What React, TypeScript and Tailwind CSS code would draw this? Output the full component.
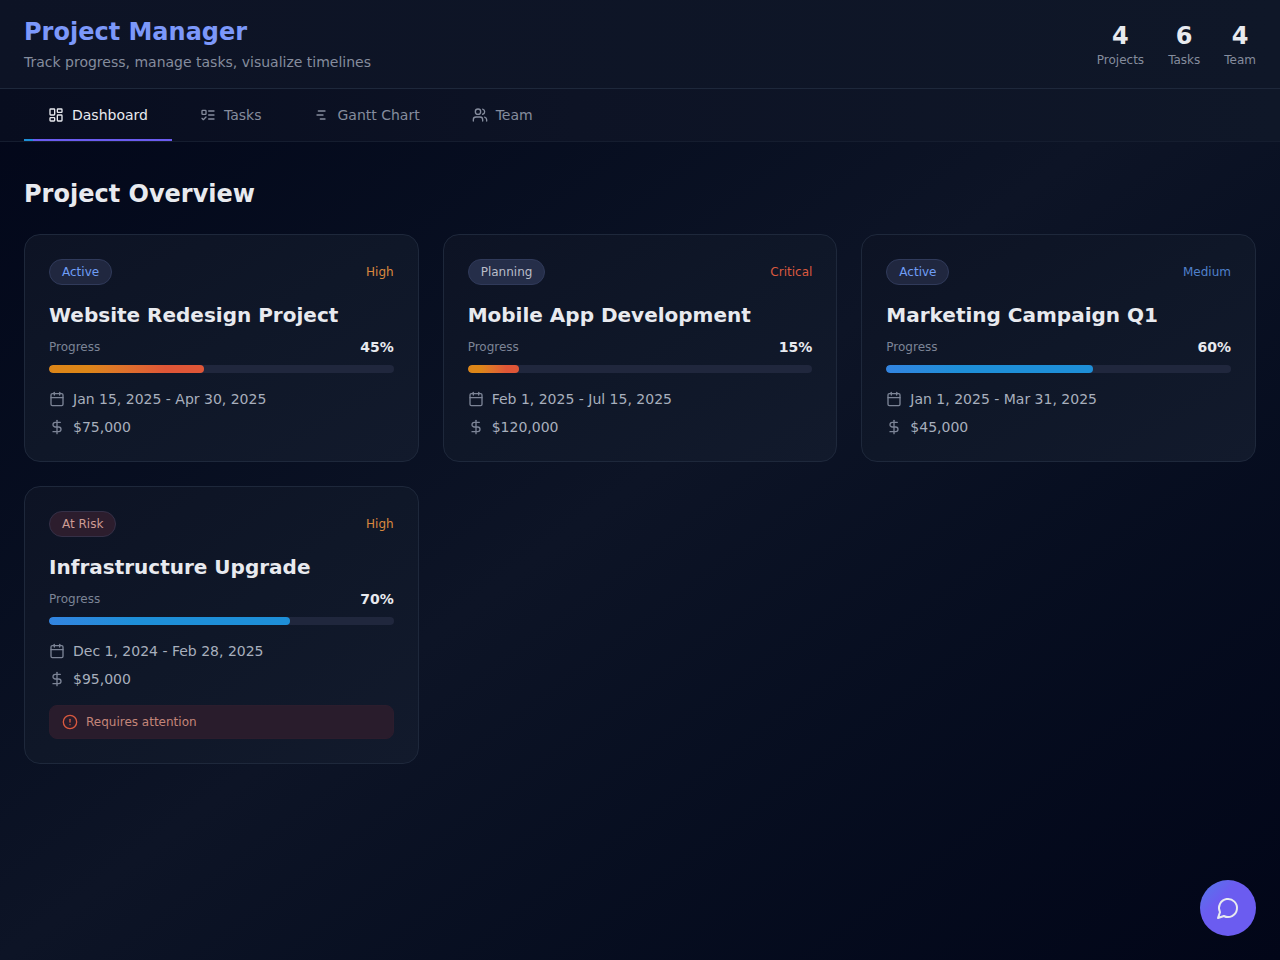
import type { ReactNode } from 'react';
import { Calendar, CircleAlert, DollarSign, LayoutDashboard, Users } from 'lucide-react';
import clsx from 'clsx';

type Project = {
  name: string;
  status: 'Active' | 'Planning' | 'At Risk';
  priority: 'High' | 'Critical' | 'Medium';
  progress: number;
  dates: string;
  budget: string;
};

const projects: Project[] = [
  { name: 'Website Redesign Project', status: 'Active', priority: 'High', progress: 45, dates: 'Jan 15, 2025 - Apr 30, 2025', budget: '$75,000' },
  { name: 'Mobile App Development', status: 'Planning', priority: 'Critical', progress: 15, dates: 'Feb 1, 2025 - Jul 15, 2025', budget: '$120,000' },
  { name: 'Marketing Campaign Q1', status: 'Active', priority: 'Medium', progress: 60, dates: 'Jan 1, 2025 - Mar 31, 2025', budget: '$45,000' },
  { name: 'Infrastructure Upgrade', status: 'At Risk', priority: 'High', progress: 70, dates: 'Dec 1, 2024 - Feb 28, 2025', budget: '$95,000' },
];

const stats = [
  { value: 4, label: 'Projects' },
  { value: 6, label: 'Tasks' },
  { value: 4, label: 'Team' },
];

function StrokeIcon({ size, children }: { size: number; children: ReactNode }) {
  return (
    <svg
      width={size}
      height={size}
      viewBox="0 0 24 24"
      fill="none"
      stroke="currentColor"
      strokeWidth="2"
      strokeLinecap="round"
      strokeLinejoin="round"
    >
      {children}
    </svg>
  );
}

function TasksIcon({ size }: { size: number }) {
  return (
    <StrokeIcon size={size}>
      <rect x="3" y="5" width="6" height="6" rx="1" />
      <path d="m3 17 2 2 4-4" />
      <path d="M13 6h8" />
      <path d="M13 12h8" />
      <path d="M13 18h8" />
    </StrokeIcon>
  );
}

function GanttIcon({ size }: { size: number }) {
  return (
    <StrokeIcon size={size}>
      <path d="M8 6h10" />
      <path d="M6 12h9" />
      <path d="M11 18h7" />
    </StrokeIcon>
  );
}

function ChatIcon({ size }: { size: number }) {
  return (
    <StrokeIcon size={size}>
      <path d="M7.9 20A9 9 0 1 0 4 16.1L2 22Z" />
    </StrokeIcon>
  );
}

const tabs = [
  { label: 'Dashboard', icon: LayoutDashboard },
  { label: 'Tasks', icon: TasksIcon },
  { label: 'Gantt Chart', icon: GanttIcon },
  { label: 'Team', icon: Users },
];

const statusStyles = {
  Active: 'border-[#303a5a] bg-[#20273f] text-[#6f9df5]',
  Planning: 'border-[#303a5a] bg-[#252e49] text-[#b9bdc8]',
  'At Risk': 'border-[#353047] bg-[#2c1d2d] text-[#cf9c94]',
};

const priorityStyles = {
  High: 'text-[#d9883f]',
  Critical: 'text-[#d9593f]',
  Medium: 'text-[#4f80cb]',
};

function ProjectCard({ project }: { project: Project }) {
  return (
    <article className="rounded-2xl border border-[#1e283b] bg-linear-to-br from-[#0d1324] via-[#0f1728] to-[#121a2c] p-6">
      <div className="mb-4 flex items-center justify-between text-xs">
        <span className={clsx('rounded-full border px-3 py-1', statusStyles[project.status])}>{project.status}</span>
        <span className={priorityStyles[project.priority]}>{project.priority}</span>
      </div>
      <h3 className="mb-2 text-xl font-semibold text-[#e8eaef]">{project.name}</h3>
      <div className="mb-2 flex items-center justify-between">
        <span className="text-xs text-[#7c8496]">Progress</span>
        <span className="text-sm font-semibold text-[#e8eaef]">{project.progress}%</span>
      </div>
      <div className="h-2 overflow-hidden rounded-full bg-[#20273d]">
        <div
          className={clsx(
            'h-full rounded-full',
            project.progress < 50
              ? 'bg-linear-to-r from-[#dd8618] from-25% to-[#df5637] to-75%'
              : 'bg-linear-to-r from-[#3284e0] to-[#1e8fd8] to-35%',
          )}
          style={{ width: `${project.progress}%` }}
        />
      </div>
      <div className="mt-4 flex flex-col gap-2 text-sm text-[#a8afbd]">
        <div className="flex items-center gap-2">
          <Calendar size={16} className="text-[#7c8496]" />
          {project.dates}
        </div>
        <div className="flex items-center gap-2">
          <DollarSign size={16} className="text-[#7c8496]" />
          {project.budget}
        </div>
      </div>
      {project.status === 'At Risk' && (
        <div className="mt-4 flex items-center gap-2 rounded-lg border border-[#2c1d2d] bg-[#291c2c] px-3 py-2 text-xs text-[#c48579]">
          <CircleAlert size={16} className="text-[#d9593f]" />
          Requires attention
        </div>
      )}
    </article>
  );
}

export default function App() {
  return (
    <div className="min-h-screen bg-linear-to-br from-[#020618] via-[#0d1426] to-[#020618] font-['DejaVu_Sans',sans-serif]">
      <header className="flex items-center justify-between border-b border-[#1e283b] bg-linear-to-r from-[#0d1325] to-[#0f1728] px-6 py-4">
        <div>
          <h1 className="text-2xl font-bold text-[#7c98fa]">Project Manager</h1>
          <p className="mt-1 text-sm text-[#858c9d]">Track progress, manage tasks, visualize timelines</p>
        </div>
        <div className="flex gap-6 text-center">
          {stats.map((stat) => (
            <div key={stat.label}>
              <div className="text-2xl font-bold text-[#e8eaef]">{stat.value}</div>
              <div className="text-xs text-[#858c9d]">{stat.label}</div>
            </div>
          ))}
        </div>
      </header>
      <nav className="flex gap-1 border-b border-[#151d2f] bg-linear-to-r from-[#080d1f] via-[#0d1325] via-45% to-[#0f1728] px-6">
        {tabs.map(({ label, icon: Icon }, index) => (
          <button
            key={label}
            className={clsx(
              'relative flex items-center gap-2 px-6 py-4 text-sm',
              index === 0 ? 'text-[#e8eaef]' : 'text-[#858c9d]',
            )}
          >
            <Icon size={16} />
            {label}
            {index === 0 && (
              <span className="absolute inset-x-0 bottom-0 h-0.5 bg-linear-to-r from-[#1e8fd8] from-6% to-[#6b5cf0] to-6%" />
            )}
          </button>
        ))}
      </nav>
      <main className="px-6 py-9">
        <h2 className="mb-6 text-2xl font-bold text-[#e8eaef]">Project Overview</h2>
        <div className="grid grid-cols-3 items-start gap-6">
          {projects.map((project) => (
            <ProjectCard key={project.name} project={project} />
          ))}
        </div>
      </main>
      <button
        aria-label="Open chat"
        className="fixed right-6 bottom-6 flex size-14 items-center justify-center rounded-full bg-linear-to-br from-[#4f78ea] to-[#6b5cf0] to-35% text-[#e8eaef]"
      >
        <ChatIcon size={24} />
      </button>
    </div>
  );
}
